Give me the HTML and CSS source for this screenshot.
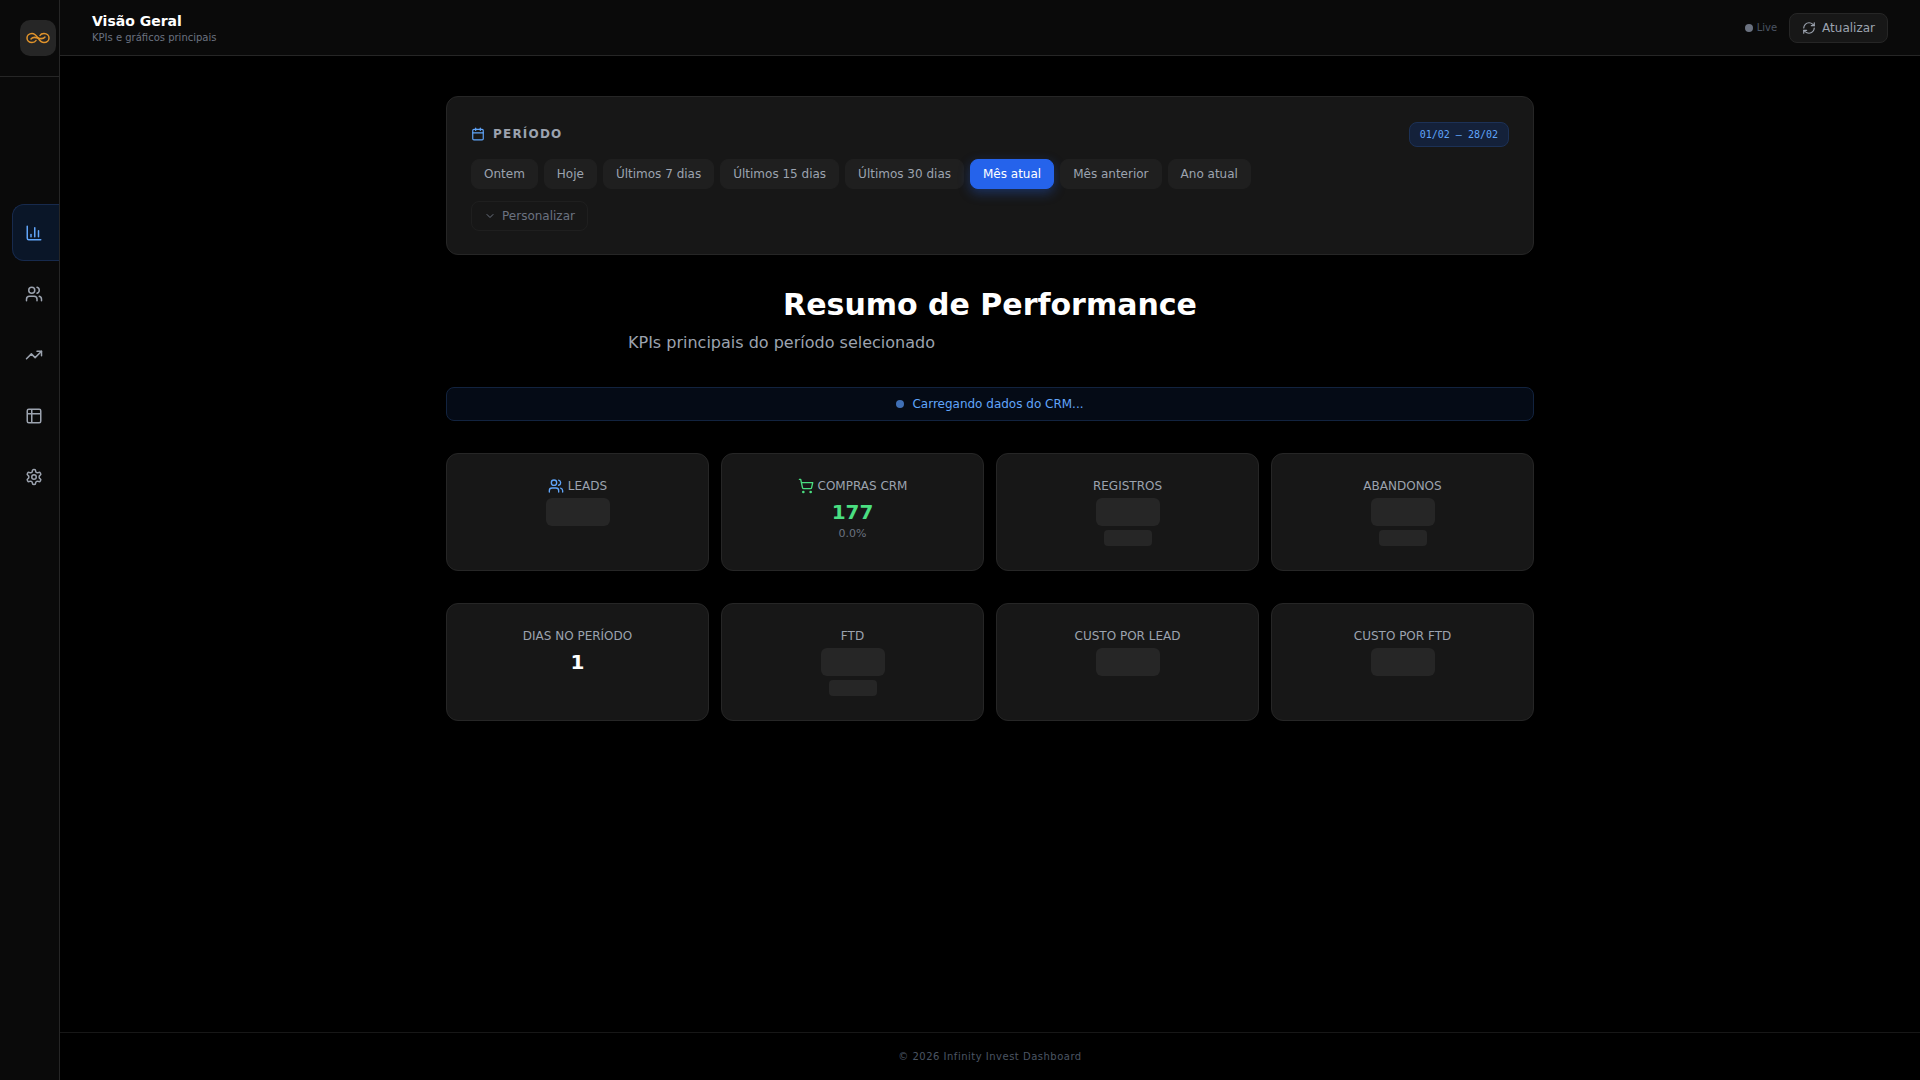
FILE: index.html
```html
<!DOCTYPE html>
<html lang="pt-BR">
<head>
    <meta charset="UTF-8">
    <meta name="viewport" content="width=device-width, initial-scale=1.0">
    <title>Infinity Invest Dashboard</title>
    <link rel="stylesheet" href="styles.css">
</head>
<body>
    <aside class="sidebar">
        <div class="brand">
            <div class="logo">
                <svg width="24" height="12" viewBox="0 0 24 12" fill="none" stroke="#e0932b" stroke-width="1.5" stroke-linecap="round">
                    <path d="M12 6C10 3 8.500 1.500 6 1.500C3 1.500 1 3.500 1 6C1 8.500 3 10.500 6 10.500C8 10.500 9.500 9.500 10 8.500"/>
                    <path d="M12 6C14 9 15.500 10.500 18 10.500C21 10.500 23 8.500 23 6C23 3.500 21 1.500 18 1.500C16 1.500 14.500 2.500 14 3.500"/>
                    <path d="M5 7C7 4.500 9 5 12 6C15 7 17 7.500 19 5"/>
                </svg>
            </div>
        </div>
        <nav class="nav">
            <a class="nav-item active">
                <svg class="icon-18" viewBox="0 0 24 24"><path d="M3 3v16a2 2 0 0 0 2 2h16"/><path d="M18 17V9"/><path d="M13 17V5"/><path d="M8 17v-3"/></svg>
            </a>
            <a class="nav-item">
                <svg class="icon-18" viewBox="0 0 24 24"><path d="M16 21v-2a4 4 0 0 0-4-4H6a4 4 0 0 0-4 4v2"/><circle cx="9" cy="7" r="4"/><path d="M22 21v-2a4 4 0 0 0-3-3.870"/><path d="M16 3.130a4 4 0 0 1 0 7.750"/></svg>
            </a>
            <a class="nav-item">
                <svg class="icon-18" viewBox="0 0 24 24"><path d="M22 7 13.500 15.500 8.500 10.500 2 17"/><path d="M16 7h6v6"/></svg>
            </a>
            <a class="nav-item">
                <svg class="icon-18" viewBox="0 0 24 24"><path d="M9 3H5a2 2 0 0 0-2 2v4m6-6h10a2 2 0 0 1 2 2v4M9 3v18m0 0h10a2 2 0 0 0 2-2V9M9 21H5a2 2 0 0 1-2-2V9m0 0h18"/></svg>
            </a>
            <a class="nav-item">
                <svg class="icon-18" viewBox="0 0 24 24"><path d="M12.220 2h-.44a2 2 0 0 0-2 2v.18a2 2 0 0 1-1 1.730l-.43.25a2 2 0 0 1-2 0l-.15-.08a2 2 0 0 0-2.730.73l-.22.38a2 2 0 0 0 .73 2.730l.15.1a2 2 0 0 1 1 1.720v.510a2 2 0 0 1-1 1.740l-.15.090a2 2 0 0 0-.73 2.730l.22.380a2 2 0 0 0 2.730.730l.15-.08a2 2 0 0 1 2 0l.43.250a2 2 0 0 1 1 1.730V20a2 2 0 0 0 2 2h.44a2 2 0 0 0 2-2v-.18a2 2 0 0 1 1-1.730l.43-.25a2 2 0 0 1 2 0l.15.080a2 2 0 0 0 2.730-.730l.22-.390a2 2 0 0 0-.73-2.730l-.15-.080a2 2 0 0 1-1-1.740v-.500a2 2 0 0 1 1-1.740l.15-.090a2 2 0 0 0 .73-2.730l-.22-.380a2 2 0 0 0-2.730-.730l-.15.080a2 2 0 0 1-2 0l-.43-.250a2 2 0 0 1-1-1.730V4a2 2 0 0 0-2-2z"/><circle cx="12" cy="12" r="3"/></svg>
            </a>
        </nav>
    </aside>

    <div class="page">
        <header class="topbar">
            <div>
                <h1 class="topbar-title">Visão Geral</h1>
                <p class="topbar-sub">KPIs e gráficos principais</p>
            </div>
            <div class="topbar-actions">
                <span class="live"><span class="live-dot"></span>Live</span>
                <button class="refresh">
                    <svg class="icon-14" viewBox="0 0 24 24"><path d="M3 12a9 9 0 0 1 9-9 9.750 9.750 0 0 1 6.740 2.740L21 8"/><path d="M21 3v5h-5"/><path d="M21 12a9 9 0 0 1-9 9 9.750 9.750 0 0 1-6.740-2.740L3 16"/><path d="M8 16H3v5"/></svg>
                    Atualizar
                </button>
            </div>
        </header>

        <main class="content">
            <section class="period">
                <div class="period-head">
                    <div class="period-title">
                        <svg class="icon-14 blue" viewBox="0 0 24 24"><path d="M8 2v4"/><path d="M16 2v4"/><rect x="3" y="4" width="18" height="18" rx="2"/><path d="M3 10h18"/></svg>
                        PERÍODO
                    </div>
                    <span class="range">01/02 — 28/02</span>
                </div>
                <div class="chips">
                    <button class="chip">Ontem</button>
                    <button class="chip">Hoje</button>
                    <button class="chip">Últimos 7 dias</button>
                    <button class="chip">Últimos 15 dias</button>
                    <button class="chip">Últimos 30 dias</button>
                    <button class="chip selected">Mês atual</button>
                    <button class="chip">Mês anterior</button>
                    <button class="chip">Ano atual</button>
                </div>
                <button class="custom">
                    <svg class="icon-12" viewBox="0 0 24 24"><path d="m6 9 6 6 6-6"/></svg>
                    Personalizar
                </button>
            </section>

            <div class="heading">
                <h2>Resumo de Performance</h2>
                <p>KPIs principais do período selecionado</p>
            </div>

            <div class="loading"><span class="loading-dot"></span>Carregando dados do CRM...</div>

            <div class="kpis">
                <div class="kpi">
                    <div class="kpi-label">
                        <svg class="icon-16 blue" viewBox="0 0 24 24"><path d="M16 21v-2a4 4 0 0 0-4-4H6a4 4 0 0 0-4 4v2"/><circle cx="9" cy="7" r="4"/><path d="M22 21v-2a4 4 0 0 0-3-3.870"/><path d="M16 3.130a4 4 0 0 1 0 7.750"/></svg>
                        LEADS
                    </div>
                    <div class="skeleton"></div>
                </div>
                <div class="kpi">
                    <div class="kpi-label">
                        <svg class="icon-16 green" viewBox="0 0 24 24"><circle cx="8" cy="21" r="1"/><circle cx="19" cy="21" r="1"/><path d="M2.050 2.050h2l2.660 12.420a2 2 0 0 0 2 1.580h9.780a2 2 0 0 0 1.950-1.570l1.650-7.430H5.120"/></svg>
                        COMPRAS CRM
                    </div>
                    <div class="kpi-value green-text">177</div>
                    <div class="kpi-sub">0.0%</div>
                </div>
                <div class="kpi">
                    <div class="kpi-label">REGISTROS</div>
                    <div class="skeleton"></div>
                    <div class="skeleton small"></div>
                </div>
                <div class="kpi">
                    <div class="kpi-label">ABANDONOS</div>
                    <div class="skeleton"></div>
                    <div class="skeleton small"></div>
                </div>
            </div>

            <div class="kpis">
                <div class="kpi">
                    <div class="kpi-label">DIAS NO PERÍODO</div>
                    <div class="kpi-value">1</div>
                </div>
                <div class="kpi">
                    <div class="kpi-label">FTD</div>
                    <div class="skeleton"></div>
                    <div class="skeleton small"></div>
                </div>
                <div class="kpi">
                    <div class="kpi-label">CUSTO POR LEAD</div>
                    <div class="skeleton"></div>
                </div>
                <div class="kpi">
                    <div class="kpi-label">CUSTO POR FTD</div>
                    <div class="skeleton"></div>
                </div>
            </div>
        </main>

        <footer class="footer">© 2026 Infinity Invest Dashboard</footer>
    </div>
</body>
</html>
```

FILE: styles.css
```css
* {
    box-sizing: border-box;
}
html, body {
    height: 100%;
}
body {
    margin: 0;
    display: flex;
    background: #000;
    color: #fff;
    font-family: "DejaVu Sans", sans-serif;
    overflow: hidden;
}
h1, h2, p {
    margin: 0;
}
button {
    font-family: inherit;
    cursor: pointer;
}
svg {
    fill: none;
    stroke: currentColor;
    stroke-width: 2;
    stroke-linecap: round;
    stroke-linejoin: round;
    flex-shrink: 0;
}
.icon-12 { width: 12px; height: 12px; }
.icon-14 { width: 14px; height: 14px; }
.icon-16 { width: 16px; height: 16px; }
.icon-18 { width: 18px; height: 18px; }
.blue { color: #60a5fa; }
.green { color: #4ade80; }

/* sidebar */
.sidebar {
    width: 60px;
    flex-shrink: 0;
    background: #0a0a0a;
    border-right: 1px solid #262626;
    display: flex;
    flex-direction: column;
}
.brand {
    height: 77px;
    padding: 20px 0 0 20px;
    border-bottom: 1px solid #262626;
}
.logo {
    width: 36px;
    height: 36px;
    border-radius: 10px;
    background: #262626;
    display: flex;
    align-items: center;
    justify-content: center;
}
.logo svg {
    stroke: #e0932b;
    stroke-width: 1.5;
}
.nav {
    display: flex;
    flex-direction: column;
    gap: 4px;
    padding: 127px 0 0 12px;
}
.nav-item {
    height: 57px;
    display: flex;
    align-items: center;
    justify-content: center;
    color: #9ca3af;
    padding-right: 4px;
    border-radius: 12px 0 0 12px;
}
.nav-item.active {
    color: #60a5fa;
    background: #0a1628;
    border: 1px solid #172a4d;
    border-right: none;
}

/* header */
.page {
    flex: 1;
    min-width: 0;
    display: flex;
    flex-direction: column;
}
.topbar {
    height: 56px;
    flex-shrink: 0;
    padding: 0 32px;
    background: #0a0a0a;
    border-bottom: 1px solid #262626;
    display: flex;
    align-items: center;
    justify-content: space-between;
}
.topbar-title {
    font-size: 14px;
    line-height: 20px;
    font-weight: 700;
    color: #fff;
}
.topbar-sub {
    font-size: 10px;
    line-height: 14px;
    color: #6b7280;
}
.topbar-actions {
    display: flex;
    align-items: center;
    gap: 12px;
}
.live {
    display: flex;
    align-items: center;
    gap: 4px;
    font-size: 10px;
    color: #4b5563;
}
.live-dot {
    width: 8px;
    height: 8px;
    border-radius: 50%;
    background: #6b7280;
}
.refresh {
    height: 30px;
    padding: 0 12px;
    display: flex;
    align-items: center;
    gap: 6px;
    font-size: 12px;
    color: #9ca3af;
    background: #171717;
    border: 1px solid #262626;
    border-radius: 8px;
}

/* content */
.content {
    flex: 1;
    width: 100%;
    max-width: 1152px;
    margin: 0 auto;
    padding: 40px 32px 0;
}
.period {
    height: 159px;
    padding: 24px;
    background: #171717;
    border: 1px solid #262626;
    border-radius: 12px;
    margin-bottom: 32px;
}
.period-head {
    display: flex;
    align-items: center;
    justify-content: space-between;
    height: 26px;
    margin-bottom: 12px;
}
.period-title {
    display: flex;
    align-items: center;
    gap: 8px;
    font-size: 12px;
    font-weight: 700;
    letter-spacing: 1.200px;
    color: #9ca3af;
}
.range {
    height: 25px;
    line-height: 23px;
    padding: 0 10px;
    font-family: "DejaVu Sans Mono", monospace;
    font-size: 10px;
    color: #60a5fa;
    background: #14213a;
    border: 1px solid #1c3156;
    border-radius: 8px;
}
.chips {
    display: flex;
    gap: 6px;
    margin-bottom: 12px;
}
.chip {
    height: 30px;
    padding: 0 12px;
    font-size: 12px;
    color: #9ca3af;
    background: #1f1f1f;
    border: 1px solid #1f1f1f;
    border-radius: 8px;
}
.chip.selected {
    color: #fff;
    background: #2563eb;
    border-color: #2563eb;
    box-shadow: 0 4px 12px rgba(37, 99, 235, 0.35);
}
.custom {
    height: 30px;
    padding: 0 12px;
    display: flex;
    align-items: center;
    gap: 6px;
    font-size: 12px;
    color: #6b7280;
    background: transparent;
    border: 1px solid #1f1f1f;
    border-radius: 8px;
}
.heading {
    margin-bottom: 32px;
}
.heading h2 {
    font-size: 30px;
    line-height: 36px;
    font-weight: 700;
    text-align: center;
    margin-bottom: 8px;
}
.heading p {
    max-width: 724px;
    margin: 0 auto;
    font-size: 16px;
    line-height: 24px;
    color: #9ca3af;
}
.loading {
    height: 34px;
    display: flex;
    align-items: center;
    justify-content: center;
    gap: 8px;
    font-size: 12px;
    color: #60a5fa;
    background: #050b16;
    border: 1px solid #12233f;
    border-radius: 8px;
    margin-bottom: 32px;
}
.loading-dot {
    width: 8px;
    height: 8px;
    border-radius: 50%;
    background: #3f6fb5;
}
.kpis {
    display: grid;
    grid-template-columns: repeat(4, 1fr);
    gap: 12px;
    margin-bottom: 32px;
}
.kpi {
    height: 118px;
    padding: 24px 16px 0;
    background: #171717;
    border: 1px solid #262626;
    border-radius: 12px;
    display: flex;
    flex-direction: column;
    align-items: center;
}
.kpi-label {
    height: 16px;
    display: flex;
    align-items: center;
    gap: 4px;
    font-size: 12px;
    color: #9ca3af;
}
.kpi-value {
    font-size: 20px;
    line-height: 28px;
    margin-top: 4px;
    font-weight: 700;
    color: #fff;
}
.green-text {
    color: #4ade80;
}
.kpi-sub {
    font-size: 11px;
    line-height: 16px;
    color: #6b7280;
}
.skeleton {
    width: 64px;
    height: 28px;
    margin-top: 4px;
    border-radius: 6px;
    background: #262626;
}
.skeleton.small {
    width: 48px;
    height: 16px;
    border-radius: 4px;
}

.footer {
    height: 48px;
    flex-shrink: 0;
    border-top: 1px solid #171717;
    display: flex;
    align-items: center;
    justify-content: center;
    font-size: 10px;
    letter-spacing: 0.500px;
    color: #4b5563;
}
```
